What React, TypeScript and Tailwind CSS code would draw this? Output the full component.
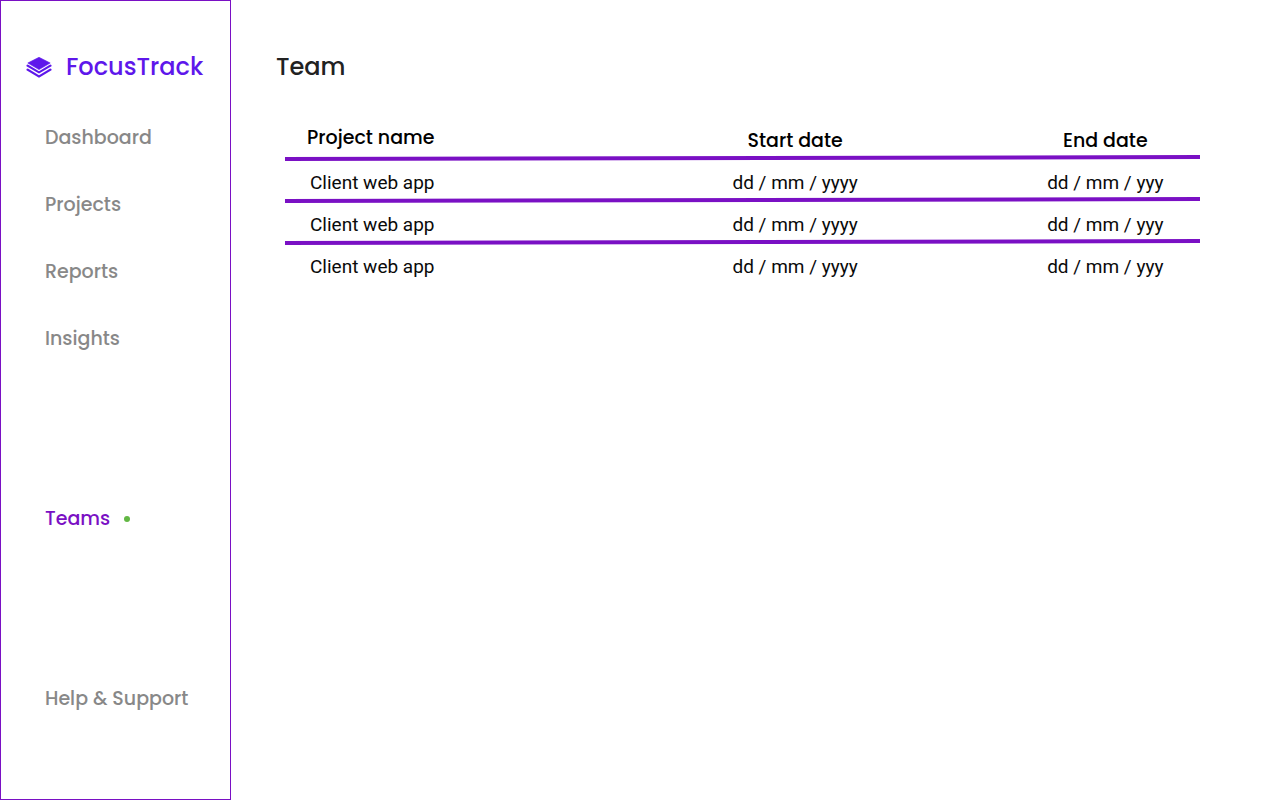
const heading = "font-[Poppins,Inter,sans-serif]";

const mainLinks = ["Dashboard", "Projects", "Reports", "Insights"];

const projects = [
  { id: 1, name: "Client web app", start: "dd / mm / yyyy", end: "dd / mm / yyy" },
  { id: 2, name: "Client web app", start: "dd / mm / yyyy", end: "dd / mm / yyy" },
  { id: 3, name: "Client web app", start: "dd / mm / yyyy", end: "dd / mm / yyy" },
];

// A slightly tilted rule along the bottom edge of a table row.
const ruled =
  "relative after:absolute after:inset-x-0 after:bottom-0 after:h-1 after:bg-[#7a10c4] after:-rotate-[0.125deg] after:content-['']";

function Logo() {
  return (
    <svg viewBox="0 0 26 24" className="h-6 w-[26px] shrink-0" fill="#5e17eb" aria-hidden="true">
      <path d="M13 2.3 L24.2 8 L13 14.6 L1.8 8 Z" stroke="#5e17eb" strokeWidth="0.6" strokeLinejoin="round" />
      <path d="M0.5 10 L1.8 9.4 L13 16.3 L24.2 9.4 L25.5 10 V11.2 L13 18.6 L0.5 11.2 Z" />
      <path d="M0.5 14 L1.8 13.4 L13 20.3 L24.2 13.4 L25.5 14 V15.2 L13 22.8 L0.5 15.2 Z" />
    </svg>
  );
}

export default function App() {
  return (
    <div className="flex min-h-screen bg-white antialiased">
      <aside
        className={`${heading} flex w-[231px] shrink-0 flex-col border border-[#7a10c4] pt-12 pl-[25px] font-medium text-[#888888]`}
      >
        <a href="#home" className="flex items-center gap-[14px] text-2xl leading-9 text-[#5e17eb]">
          <Logo />
          FocusTrack
        </a>
        <nav className="flex flex-col pt-[39px] pl-[19px] text-[19px] leading-7">
          <ul className="flex flex-col gap-[39px]">
            {mainLinks.map((label) => (
              <li key={label}>
                <a href={`#${label.toLowerCase()}`}>{label}</a>
              </li>
            ))}
          </ul>
          <a href="#teams" aria-current="page" className="mt-[152px] flex items-center gap-[14px] text-[#7a10c4]">
            Teams
            <span className="size-[6px] rounded-full bg-[#62b744]" />
          </a>
          <a href="#help" className="mt-[152px]">
            Help &amp; Support
          </a>
        </nav>
      </aside>

      <main className="flex-1 pt-[49px] pr-20 pl-[45px]">
        <h1 className={`${heading} text-2xl leading-9 font-medium text-[#222222]`}>Team</h1>
        <div className="pt-[35px] pl-[9px]">
          <table className="w-full table-fixed border-collapse text-center font-[Roboto,sans-serif] text-[19px] leading-6 text-[#0a0a0a]">
            <colgroup>
              <col className="w-[32.2%]" />
              <col className="w-[47.1%]" />
              <col className="w-[20.7%]" />
            </colgroup>
            <thead className={`${heading} text-black`}>
              <tr className={`${ruled} h-10`}>
                <th scope="col" className="pb-1 pl-[22px] text-left font-medium">Project name</th>
                <th scope="col" className="pt-[2px] font-medium">Start date</th>
                <th scope="col" className="pt-[2px] font-medium">End date</th>
              </tr>
            </thead>
            <tbody>
              {projects.map((project, index) => (
                <tr key={project.id} className={index < projects.length - 1 ? `${ruled} h-[42px]` : "h-[42px]"}>
                  <td className="pt-1 pl-[25px] text-left">{project.name}</td>
                  <td className="pt-1">{project.start}</td>
                  <td className="pt-1">{project.end}</td>
                </tr>
              ))}
            </tbody>
          </table>
        </div>
      </main>
    </div>
  );
}
